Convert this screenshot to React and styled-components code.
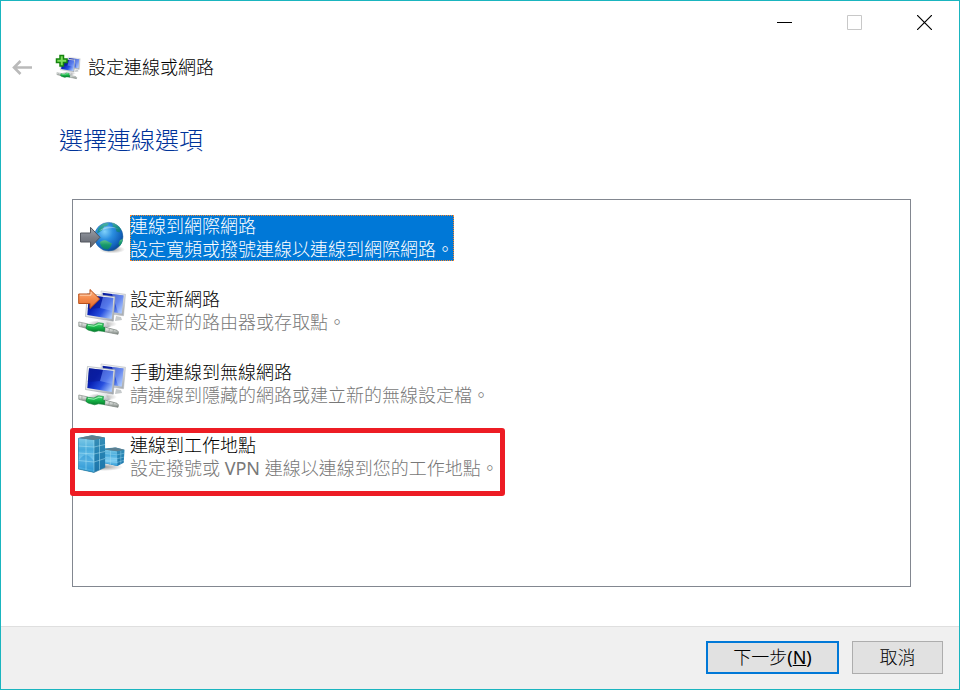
import React, { useState } from 'react';
import styled, { createGlobalStyle } from 'styled-components';

const GlobalStyle = createGlobalStyle`
  * {
    box-sizing: border-box;
  }
  body {
    margin: 0;
    background: #ffffff;
    color: #000000;
    font-family: "Noto Sans", "Noto Sans CJK TC", sans-serif;
    font-weight: 300;
    font-size: 18px;
  }
  button {
    font: inherit;
    color: inherit;
  }
`;

const Dialog = styled.main`
  display: flex;
  flex-direction: column;
  min-height: 100vh;
  border: 1px solid #1ab5bf;
`;

const TitleBar = styled.div`
  display: flex;
  justify-content: flex-end;
  height: 43px;
`;

const WindowButton = styled.button`
  display: flex;
  align-items: center;
  justify-content: center;
  width: 70px;
  padding: 0;
  border: 0;
  background: none;
`;

const Header = styled.header`
  display: flex;
  align-items: center;
  height: 46px;
  padding-left: 11px;
`;

const BackButton = styled.button`
  display: flex;
  padding: 0;
  margin-right: 23px;
  border: 0;
  background: none;
`;

const Title = styled.h1`
  margin: 0 0 0 7px;
  font-size: 18px;
  font-weight: 300;
  line-height: 24px;
`;

const Content = styled.section`
  flex: 1;
  display: flex;
  flex-direction: column;
  padding: 34px 48px 39px 71px;
`;

const Heading = styled.h2`
  margin: 0 0 43px -13px;
  color: #003399;
  font-size: 24px;
  font-weight: 300;
  line-height: 32px;
`;

const OptionList = styled.ul`
  flex: 1;
  display: flex;
  flex-direction: column;
  align-items: flex-start;
  gap: 25px;
  margin: 0;
  padding: 15px 5px;
  border: 1px solid #828790;
  list-style: none;
`;

const OptionItem = styled.li`
  position: relative;
`;

const OptionButton = styled.button`
  display: flex;
  align-items: flex-start;
  gap: 4px;
  padding: 0;
  border: 0;
  outline: 0;
  background: none;
  text-align: left;
`;

const OptionText = styled.span`
  display: flex;
  flex-direction: column;
  outline: 1px dotted ${({ $selected }) => ($selected ? '#ff8728' : 'transparent')};
  outline-offset: -1px;
  background: ${({ $selected }) => ($selected ? '#0078d7' : 'transparent')};
  color: ${({ $selected }) => ($selected ? '#ffffff' : '#000000')};
  line-height: 23px;
`;

const Description = styled.span`
  color: ${({ $selected }) => ($selected ? '#ffffff' : '#787878')};
`;

// Latin letters are set a little heavier than the Chinese text
const Latin = styled.span`
  font-weight: 400;
`;

const Highlight = styled.span`
  position: absolute;
  inset: -6px -6px -14px -8px;
  border: 5px solid #ed1c24;
  border-radius: 3px;
  pointer-events: none;
`;

const Footer = styled.footer`
  display: flex;
  justify-content: flex-end;
  gap: 13px;
  padding: 14px 16px 15px;
  border-top: 1px solid #dfdfdf;
  background: #f0f0f0;
`;

const FooterButton = styled.button`
  min-width: ${({ $primary }) => ($primary ? '133px' : '91px')};
  height: 33px;
  padding: 0 12px 2px;
  border: ${({ $primary }) => ($primary ? '2px solid #0078d7' : '1px solid #adadad')};
  background: #e1e1e1;
  line-height: 24px;
`;

const Gradient = ({ id, stops, ...rest }) => (
  <linearGradient id={id} {...rest}>
    {stops.map((color, index) => (
      <stop key={index} offset={index / (stops.length - 1)} stopColor={color} />
    ))}
  </linearGradient>
);

// shared gradients of the pictograms
const IconDefs = () => (
  <svg width="0" height="0" style={{ position: 'absolute' }} aria-hidden="true">
    <defs>
      <Gradient id="screen" x1="0" y1="0.1" x2="1" y2="0.8" stops={['#0a1f9c', '#0720b4', '#2850df', '#a9c9ff']} />
      <Gradient id="bezel" x1="0" y1="0" x2="1" y2="1" stops={['#ffffff', '#e4e6e8', '#9da2a8']} />
      <Gradient id="plug" x1="0" y1="0" x2="0" y2="1" stops={['#f7f8f7', '#c9cecb', '#747b76']} />
      <Gradient id="cable" x1="0" y1="0" x2="0" y2="1" stops={['#5be07f', '#17b548', '#067d2c']} />
      <Gradient id="orange" x1="0" y1="0" x2="0" y2="1" stops={['#ffb583', '#f48a4c', '#e0682a']} />
      <Gradient id="grey" x1="0" y1="0" x2="0" y2="1" stops={['#a2a6ad', '#7b7f88', '#5f636c']} />
      <Gradient id="land" x1="0" y1="0" x2="0" y2="1" stops={['#5cbf8a', '#16996b', '#0b7f6b']} />
      <Gradient id="glassLeft" x1="0" y1="0" x2="0" y2="1" stops={['#7cc8e6', '#48abdc', '#7fcdf2', '#2e9bd6']} />
      <Gradient id="glassRight" x1="0" y1="0" x2="0" y2="1" stops={['#3a8fb6', '#2482b2', '#1d74aa']} />
      <radialGradient id="ocean" cx="0.36" cy="0.32" r="0.72">
        <stop offset="0" stopColor="#7fd0fa" />
        <stop offset="0.4" stopColor="#2b8fe0" />
        <stop offset="0.8" stopColor="#1263bd" />
        <stop offset="1" stopColor="#0c4790" />
      </radialGradient>
      <radialGradient id="shade">
        <stop offset="0" stopColor="#000000" stopOpacity="0.4" />
        <stop offset="1" stopColor="#000000" stopOpacity="0" />
      </radialGradient>
    </defs>
  </svg>
);

const Computers = () => (
  <>
    <ellipse cx="24" cy="36" rx="15" ry="4" fill="url(#shade)" />
    <path d="M38 28l5 1 1 3-7 1z" fill="#c6cacc" />
    <path d="M23 3l24.500 3.300-2 21.500L25 25z" fill="url(#bezel)" stroke="#aeb3b8" strokeWidth="0.500" />
    <path d="M24.500 4.800l21 2.800-1.800 18L26 23z" fill="url(#screen)" />
    <path d="M34 6l11.500 1.600-1.800 18-3.500-.6z" fill="#b6ceff" opacity="0.45" />
    <path d="M20 31l8 1.500 1 4 4 1.500-6 2.500-11-3 4-2z" fill="url(#bezel)" />
    <path d="M9.500 5.500L37 8.700l-1.700 24.500L7.500 28.500z" fill="url(#bezel)" stroke="#9ca2a8" strokeWidth="0.600" />
    <path d="M11 7.200l24.300 2.900-1.500 21L9.300 27z" fill="url(#screen)" />
    <path d="M11 7.200l14 1.700L22 20 9.800 21z" fill="#0b1c98" opacity="0.65" />
    <path d="M25 8.900l10.300 1.200-1 13L22 20z" fill="#9bb8ff" opacity="0.4" />
    <path d="M.8 34l8.500 1.800v4.700L.8 38.300z" fill="url(#plug)" stroke="#8d948f" strokeWidth="0.800" />
    <path d="M26.500 39l12.500 3.300q2.200 1 1 4L26 43.600z" fill="url(#plug)" stroke="#7f8681" strokeWidth="0.800" />
    <path d="M31.500 40.500l-.8 4M35.500 41.500l-.8 4M4 35l-.2 4" stroke="#9ba29d" strokeWidth="0.800" />
    <path d="M9 36.200l7 .8 4.500-2.300 5 .8-.5 3.500 2 .8-.5 3.700-6-.7-4 1-6.500-1.800-2-1.500z" fill="url(#cable)" stroke="#087c31" strokeWidth="0.600" />
    <path d="M10 37.400l6 .8 5-2 3 .5" fill="none" stroke="#a5f2b9" strokeWidth="0.900" />
  </>
);

const GlobeIcon = () => (
  <svg width="48" height="48" viewBox="0 0 48 48" aria-hidden="true">
    <ellipse cx="34" cy="34.500" rx="13" ry="4" fill="url(#shade)" />
    <circle cx="30.700" cy="21.700" r="14.300" fill="url(#ocean)" stroke="#2c6ca8" strokeWidth="0.500" />
    <path d="M20 14q3-5 8-6l3 .5-2 2.500-3 .5-1 3-4 3-2 1z" fill="url(#land)" opacity="0.7" />
    <path d="M33 7.600q7 1.500 10 7l-1.500 3-3-1-1-3.500-3-1.500.5-2z" fill="url(#land)" opacity="0.7" />
    <path d="M22 27q4-3 8-.5l4 2q-1 4-4 6l-4-.5q-4-3-4-7z" fill="url(#land)" />
    <path d="M42 25l3-1q-.5 4-3.500 7.500l-1-3z" fill="url(#land)" />
    <path d="M21 16q8-8 20-2-8-3-20 2z" fill="#ffffff" opacity="0.35" />
    <path d="M2.500 18h10v-5.700L22 22.300l-9.500 10V27h-10z" fill="url(#grey)" stroke="#53565e" strokeWidth="1" />
  </svg>
);

const NewNetworkIcon = () => (
  <svg width="48" height="48" viewBox="0 0 48 48" aria-hidden="true">
    <Computers />
    <path d="M.7 6H12V1.500l9.700 9.500L12 20.500v-5H.7z" fill="url(#orange)" stroke="#b9501a" strokeWidth="1" />
    <path d="M1.800 7.200H13V4" fill="none" stroke="#ffe0c5" strokeWidth="0.800" />
  </svg>
);

const WirelessIcon = () => (
  <svg width="48" height="48" viewBox="0 0 48 48" aria-hidden="true">
    <Computers />
  </svg>
);

const WorkplaceIcon = () => (
  <svg width="48" height="48" viewBox="0 0 48 48" aria-hidden="true">
    <ellipse cx="26" cy="33" rx="19" ry="4" fill="url(#shade)" />
    <path d="M25 14.500l13-1 8.500 2.200-.8 13-6.200 3.300L25 29z" fill="url(#glassRight)" />
    <path d="M26 15.500l13 1.700.5 14.800L26 29z" fill="url(#glassLeft)" />
    <path d="M26 15.500l11-2 9.500 2.200-7.500 1.500z" fill="#5d7f90" />
    <path d="M27 19.500l12 1.300 7-1.500M27 23.500l12 1.200 7-1.600M27 27l12 1.500 7-2.200M32.500 17v14M42.800 17v13" fill="none" stroke="#a7dff2" strokeWidth="0.400" />
    <path d="M.3 4L14 1.300 27 3.600l.2 29.700L16 38.400.3 35z" fill="url(#glassRight)" />
    <path d="M.3 4.300L16 6v32.400L.3 35z" fill="url(#glassLeft)" />
    <path d="M.3 4L14 1.300 27 3.600 16 6z" fill="#5f7f8d" />
    <path d="M1 26q4-5 7-5t8 6v9L1 33z" fill="#238fd0" opacity="0.5" />
    <path d="M.5 12l15.500 1 11-2.500M.5 19l15.500 1 11-2.500M.5 26.500L16 28l11-3.500M8 5v31M16 6v32M21.500 5v31" fill="none" stroke="#b5e8f7" strokeWidth="0.600" opacity="0.8" />
    <path d="M.3 4.300V35L16 38.400l11.200-5" fill="none" stroke="#2d7899" strokeWidth="0.600" />
  </svg>
);

const SetupIcon = () => (
  <svg width="26" height="26" viewBox="0 0 52 52" aria-hidden="true">
    <g transform="translate(3 3)">
      <Computers />
    </g>
    <path d="M10 3h7v7h7v7h-7v7h-7v-7H3v-7h7z" fill="#7fe05c" stroke="#16840f" strokeWidth="3" />
  </svg>
);

const options = [
  { id: 'internet', Icon: GlobeIcon, title: '連線到網際網路', text: '設定寬頻或撥號連線以連線到網際網路。' },
  { id: 'network', Icon: NewNetworkIcon, title: '設定新網路', text: '設定新的路由器或存取點。' },
  { id: 'wireless', Icon: WirelessIcon, title: '手動連線到無線網路', text: '請連線到隱藏的網路或建立新的無線設定檔。' },
  {
    id: 'workplace',
    Icon: WorkplaceIcon,
    title: '連線到工作地點',
    text: <>設定撥號或<Latin> VPN </Latin>連線以連線到您的工作地點。</>,
    highlighted: true,
  },
];

const Option = ({ option, selected, onSelect }) => {
  const { Icon, title, text, highlighted } = option;
  return (
    <OptionItem>
      <OptionButton type="button" aria-pressed={selected} onClick={onSelect}>
        <Icon />
        <OptionText $selected={selected}>
          <span>{title}</span>
          <Description $selected={selected}>{text}</Description>
        </OptionText>
      </OptionButton>
      {highlighted && <Highlight />}
    </OptionItem>
  );
};

const App = () => {
  const [selected, setSelected] = useState('internet');

  return (
    <Dialog lang="zh-Hant">
      <GlobalStyle />
      <IconDefs />
      <TitleBar>
        <WindowButton type="button" aria-label="最小化">
          <svg width="15" height="15" viewBox="0 0 15 15">
            <path d="M0 7.500h15" stroke="#000000" />
          </svg>
        </WindowButton>
        <WindowButton type="button" aria-label="最大化" disabled>
          <svg width="15" height="15" viewBox="0 0 15 15">
            <path d="M.5.500h14v14H.5z" fill="none" stroke="#c8c8c8" />
          </svg>
        </WindowButton>
        <WindowButton type="button" aria-label="關閉">
          <svg width="15" height="15" viewBox="0 0 15 15">
            <path d="M0 0l15 15M15 0L0 15" stroke="#000000" strokeWidth="1.200" />
          </svg>
        </WindowButton>
      </TitleBar>
      <Header>
        <BackButton type="button" aria-label="上一步">
          <svg width="20" height="16" viewBox="0 0 20 16">
            <path d="M20 8.500H2M8.500 2L2 8.500 8.500 15" fill="none" stroke="#bababa" strokeWidth="2.600" />
          </svg>
        </BackButton>
        <SetupIcon />
        <Title>設定連線或網路</Title>
      </Header>
      <Content>
        <Heading>選擇連線選項</Heading>
        <OptionList>
          {options.map((option) => (
            <Option
              key={option.id}
              option={option}
              selected={selected === option.id}
              onSelect={() => setSelected(option.id)}
            />
          ))}
        </OptionList>
      </Content>
      <Footer>
        <FooterButton type="button" $primary>
          下一步<Latin>(<u>N</u>)</Latin>
        </FooterButton>
        <FooterButton type="button">取消</FooterButton>
      </Footer>
    </Dialog>
  );
};

export default App;
